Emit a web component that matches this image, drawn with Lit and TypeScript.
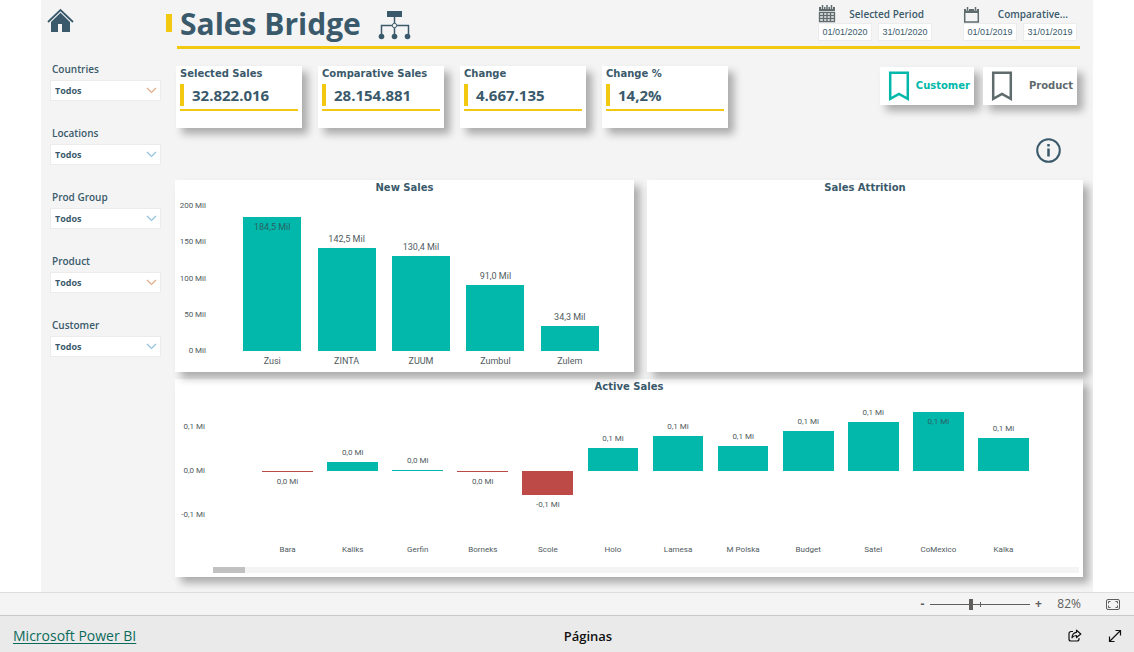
import { LitElement, html, css, svg } from "lit";
import { customElement, property } from "lit/decorators.js";
import { classMap } from "lit/directives/class-map.js";

interface Bar {
  name: string;
  value: number;
  label: string;
  inside?: boolean;
}

const NEW_SALES: Bar[] = [
  { name: "Zusi", value: 184.5, label: "184,5 Mil", inside: true },
  { name: "ZINTA", value: 142.5, label: "142,5 Mil" },
  { name: "ZUUM", value: 130.4, label: "130,4 Mil" },
  { name: "Zumbul", value: 91, label: "91,0 Mil" },
  { name: "Zulem", value: 34.3, label: "34,3 Mil" },
];

const ACTIVE_SALES: Bar[] = [
  { name: "Bara", value: -0.003, label: "0,0 Mi" },
  { name: "Kaliks", value: 0.02, label: "0,0 Mi" },
  { name: "Gerfin", value: 0.003, label: "0,0 Mi" },
  { name: "Borneks", value: -0.002, label: "0,0 Mi" },
  { name: "Scole", value: -0.055, label: "-0,1 Mi" },
  { name: "Holo", value: 0.053, label: "0,1 Mi" },
  { name: "Lamesa", value: 0.08, label: "0,1 Mi" },
  { name: "M Polska", value: 0.056, label: "0,1 Mi" },
  { name: "Budget", value: 0.091, label: "0,1 Mi" },
  { name: "Satel", value: 0.111, label: "0,1 Mi" },
  { name: "CoMexico", value: 0.134, label: "0,1 Mi", inside: true },
  { name: "Kalka", value: 0.074, label: "0,1 Mi" },
];

const KPIS = [
  ["Selected Sales", "32.822.016"],
  ["Comparative Sales", "28.154.881"],
  ["Change", "4.667.135"],
  ["Change %", "14,2%"],
];

const FILTERS = [
  { name: "Countries", warm: true },
  { name: "Locations", warm: false },
  { name: "Prod Group", warm: false },
  { name: "Product", warm: true },
  { name: "Customer", warm: false },
];

/** Column chart with an optional negative half below the zero line. */
@customElement("bar-chart")
export class BarChart extends LitElement {
  @property({ attribute: false }) bars: Bar[] = [];
  @property({ attribute: false }) ticks: string[] = [];
  @property({ type: Number }) max = 1;
  @property({ type: Boolean, reflect: true }) signed = false;

  static styles = css`
    :host {
      display: grid;
      grid-template-columns: 31px 1fr;
      column-gap: 29px;
      padding: 4px 27px 5px 0;
      font-family: Roboto, "Liberation Sans", sans-serif;
      font-size: 9px;
      line-height: 12px;
      color: #4f5b60;
    }
    :host([signed]) {
      column-gap: 49px;
      padding: 10px 47px 0 0;
      font-size: 8px;
    }
    .axis {
      height: 157px;
      display: flex;
      flex-direction: column;
      justify-content: space-between;
      text-align: right;
      font-size: 8px;
      white-space: nowrap;
    }
    :host([signed]) .axis {
      height: 100px;
      margin-top: 16px;
      padding-right: 1px;
    }
    .plot {
      display: grid;
      grid-auto-flow: column;
      grid-auto-columns: 1fr;
      padding-top: 6px;
    }
    :host([signed]) .plot {
      padding-top: 0;
    }
    .col {
      text-align: center;
      white-space: nowrap;
      min-width: 0;
    }
    .up {
      height: 145px;
      display: flex;
      flex-direction: column;
      justify-content: flex-end;
      align-items: center;
    }
    .down {
      height: 66px;
      display: flex;
      flex-direction: column;
      align-items: center;
    }
    :host([signed]) .up {
      height: 66px;
    }
    .bar {
      flex: none;
      width: 78%;
      min-height: 1px;
      background: #01b8aa;
    }
    .neg {
      background: #be4a47;
    }
    .above {
      margin-bottom: 3px;
    }
    .below {
      margin-top: 4px;
    }
    .in {
      display: block;
      padding-top: 4px;
      color: #2b6267;
    }
    .name {
      margin-top: 4px;
    }
    :host([signed]) .name {
      margin-top: 7px;
    }
  `;

  private bar(b: Bar) {
    const size = `height:${(Math.abs(b.value) / this.max) * 100}%`;
    const neg = b.value < 0;
    const body = html`<div class=${classMap({ bar: true, neg })} style=${size}>
      ${b.inside ? html`<span class="in">${b.label}</span>` : ""}
    </div>`;
    return html`<div class="col">
      <div class="up">
        ${neg || b.inside ? "" : html`<span class="above">${b.label}</span>`}${neg ? "" : body}
      </div>
      ${this.signed
        ? html`<div class="down">${neg ? html`${body}<span class="below">${b.label}</span>` : ""}</div>`
        : ""}
      <div class="name">${b.name}</div>
    </div>`;
  }

  render() {
    return html`
      <div class="axis">${this.ticks.map((t) => html`<span>${t}</span>`)}</div>
      <div class="plot">${this.bars.map((b) => this.bar(b))}</div>
    `;
  }
}

const homeIcon = svg`<svg width="28" height="26" viewBox="0 0 28 26" fill="#3a5a6b">
  <path d="M1 14 13.500 2 26 14" fill="none" stroke="#3a5a6b" stroke-width="1.800"/>
  <path d="M13.500 4.800 4 14V24h7v-8h4v8h8V14z"/></svg>`;

const bridgeIcon = svg`<svg width="34" height="30" viewBox="0 0 34 30" fill="#3a5a6b">
  <path d="M9 1h15v6H9z"/>
  <path d="M16.500 7v22M3.500 25v-9.500h27V25" fill="none" stroke="#3a5a6b" stroke-width="1.500"/>
  <circle cx="16.500" cy="15.500" r="2.200" fill="#f4f4f4" stroke="#3a5a6b"/>
  <circle cx="3.500" cy="26.500" r="2.800"/><circle cx="16.500" cy="26.500" r="2.800"/><circle cx="29.500" cy="26.500" r="2.800"/></svg>`;

const gridCalendar = svg`<svg width="18" height="18" viewBox="0 0 18 18" fill="none" stroke="#5f6b6d">
  <path d="M1 2h16v4H1z" fill="#5f6b6d" stroke="none"/>
  <path d="M4.500 0v4M9 0v4M13.500 0v4" stroke-width="3" stroke="#f4f4f4"/>
  <path d="M4.500 0v4M9 0v4M13.500 0v4" stroke-width="1.500"/>
  <path d="M1.500 7.500v9h15v-9zM1.500 10.500h15M1.500 13.500h15M5.500 7v10M9 7v10M12.500 7v10" stroke-width="1.300"/></svg>`;

const blankCalendar = svg`<svg width="18" height="18" viewBox="0 0 18 18" fill="none" stroke="#5f6b6d">
  <path d="M1 4h15v4H1z" fill="#5f6b6d" stroke="none"/>
  <path d="M4.500 2v3.500M12.500 2v3.500" stroke-width="3" stroke="#f4f4f4"/>
  <path d="M4.500 2v3.500M12.500 2v3.500" stroke-width="1.500"/>
  <path d="M1.700 8v9h13.600V8" stroke-width="1.500"/></svg>`;

const bookmark = svg`<svg width="22" height="30" viewBox="0 0 22 30" fill="none" stroke="currentColor" stroke-width="2.500">
  <path d="M2.200 1.800h17.600v26L11 23l-8.800 4.800z"/></svg>`;

const chevron = svg`<svg width="11" height="7" viewBox="0 0 11 7" fill="none" stroke="currentColor" stroke-width="1.200">
  <path d="M1 1l4.500 4.500L10 1"/></svg>`;

@customElement("app-root")
export class AppRoot extends LitElement {
  static styles = css`
    :host {
      display: flex;
      flex-direction: column;
      min-height: 100vh;
      background: #fff;
      color: #3a5a6b;
      font-family: "Open Sans", "Noto Sans", sans-serif;
      font-size: 10px;
      line-height: 16px;
    }
    * {
      box-sizing: border-box;
    }
    svg {
      display: block;
      flex: none;
    }
    h1,
    h2 {
      margin: 0;
    }
    button,
    input,
    select {
      font: inherit;
      color: inherit;
      margin: 0;
      border: 0;
      border-radius: 0;
    }
    button {
      padding: 0;
      background: none;
      cursor: pointer;
    }
    .report {
      flex: 1;
      margin: 0 41px;
      padding-bottom: 15px;
      background: #f4f4f4;
      overflow: hidden;
    }
    .header {
      display: flex;
      height: 46px;
      padding-right: 16px;
    }
    .home {
      flex: none;
      width: 125px;
      padding: 8px 0 0 6px;
    }
    .home button {
      display: block;
    }
    .mark {
      flex: none;
      width: 6px;
      height: 18px;
      margin: 14px 8px 0 0;
      background: #f2c811;
    }
    h1 {
      font-size: 30px;
      line-height: 48px;
      font-weight: 700;
      white-space: nowrap;
    }
    .bridge {
      margin: 10px auto 0 17px;
    }
    .period {
      width: 114px;
      margin-left: 31px;
      padding-top: 4px;
    }
    .period-title {
      display: flex;
      align-items: center;
      justify-content: space-between;
      height: 19px;
      padding-right: 8px;
      font-weight: 600;
      white-space: nowrap;
    }
    .second .period-title {
      padding-right: 9px;
    }
    .dates {
      display: flex;
      gap: 6px;
    }
    .dates input {
      width: 54px;
      height: 18px;
      padding: 0;
      border: 1px solid #ececec;
      background: #fff;
      text-align: center;
      font-family: "Liberation Sans", Arial, sans-serif;
      font-size: 9px;
    }
    .rule {
      height: 3px;
      margin: 0 13px 0 136px;
      background: #f2c811;
    }
    .body {
      display: grid;
      grid-template-columns: 134px 1fr;
      padding-right: 10px;
    }
    .filters {
      display: flex;
      flex-direction: column;
      gap: 24px;
      padding: 12px 14px 0 9px;
    }
    .filter {
      position: relative;
      font-weight: 600;
    }
    .filter label {
      display: block;
      padding-left: 2px;
      margin-bottom: 3px;
    }
    .filter select {
      display: block;
      width: 100%;
      height: 21px;
      padding: 0 4px;
      border: 1px solid #ececec;
      background: #fff;
      appearance: none;
      font-size: 9px;
      font-weight: 700;
    }
    .filter svg {
      position: absolute;
      right: 4px;
      bottom: 7px;
      color: #8fc3dd;
      pointer-events: none;
    }
    .filter.warm svg {
      color: #e0ab85;
    }
    .main {
      min-width: 0;
      padding-top: 17px;
    }
    .top {
      display: flex;
      justify-content: space-between;
      align-items: flex-start;
      padding: 0 6px 0 1px;
    }
    .kpis {
      display: grid;
      grid-template-columns: repeat(4, 126px);
      gap: 16px;
    }
    .card,
    .panel,
    .tab {
      background: #fff;
      box-shadow: 6px 6px 8px rgba(0, 0, 0, 0.3);
    }
    .card {
      height: 62px;
      padding: 0 4px;
    }
    h2,
    .tab {
      font-family: "DejaVu Sans", Verdana, sans-serif;
      font-size: 10px;
      line-height: 16px;
      font-weight: 700;
      white-space: nowrap;
    }
    .kpi {
      margin-top: 2px;
      padding-left: 8px;
      border-left: 4px solid #f2c811;
      font-size: 15px;
      line-height: 22px;
      font-weight: 700;
    }
    .line {
      height: 2px;
      margin-top: 3px;
      background: #f2c811;
    }
    .tabs {
      display: flex;
      gap: 9px;
      padding-top: 1px;
    }
    .tab {
      display: flex;
      align-items: center;
      justify-content: space-between;
      width: 94px;
      height: 38px;
      padding: 0 4px 0 8px;
      color: #5f6b6d;
    }
    .tab.on {
      color: #01b8aa;
    }
    .info {
      display: flex;
      justify-content: flex-end;
      padding: 10px 22px 17px 0;
    }
    .panels {
      position: relative;
      z-index: 1;
      display: grid;
      grid-template-columns: 459fr 436fr;
      gap: 13px;
    }
    .panel h2 {
      text-align: center;
    }
    .active {
      margin-top: 7px;
      padding-bottom: 4px;
    }
    .scroll {
      height: 6px;
      margin: 11px 4px 0 38px;
      background: #f4f4f4;
    }
    .thumb {
      width: 32px;
      height: 6px;
      background: #c1c1c1;
    }
    .status {
      display: flex;
      align-items: center;
      justify-content: flex-end;
      height: 24px;
      padding-right: 14px;
      border-top: 1px solid #dedede;
      border-bottom: 1px solid #c8c8c8;
      background: #f4f4f4;
      color: #605e5c;
      font-size: 12px;
    }
    .step {
      width: 16px;
      line-height: 16px;
      font-weight: 700;
    }
    .zoom {
      width: 100px;
      height: 12px;
      appearance: none;
      background:
        linear-gradient(#605e5c, #605e5c) 50px 50% / 1px 5px no-repeat,
        linear-gradient(#605e5c, #605e5c) 0 50% / 100% 1px no-repeat;
    }
    .zoom::-webkit-slider-thumb {
      appearance: none;
      width: 4px;
      height: 11px;
      background: #605e5c;
    }
    .percent {
      margin: 0 25px 0 11px;
    }
    .footer {
      display: grid;
      grid-template-columns: 27fr auto 25fr;
      align-items: center;
      height: 36px;
      padding: 3px 12px 0 13px;
      background: #eaeaea;
      color: #111;
      font-size: 13px;
      font-weight: 600;
    }
    .footer a {
      justify-self: start;
      color: #0b6a5b;
      font-size: 14px;
      font-weight: 400;
      text-underline-offset: 2px;
    }
    .actions {
      display: flex;
      justify-content: flex-end;
      gap: 26px;
    }
  `;

  private period(title: string, from: string, to: string, icon: unknown, second: boolean) {
    return html`<div class=${classMap({ period: true, second })}>
      <div class="period-title">${icon}<span>${title}</span></div>
      <div class="dates">
        <input type="text" aria-label="${title} from" .value=${from} />
        <input type="text" aria-label="${title} to" .value=${to} />
      </div>
    </div>`;
  }

  render() {
    return html`
      <main class="report">
        <header class="header">
          <div class="home"><button aria-label="Home">${homeIcon}</button></div>
          <div class="mark"></div>
          <h1>Sales Bridge</h1>
          <div class="bridge">${bridgeIcon}</div>
          ${this.period("Selected Period", "01/01/2020", "31/01/2020", gridCalendar, false)}
          ${this.period("Comparative...", "01/01/2019", "31/01/2019", blankCalendar, true)}
        </header>
        <div class="rule"></div>
        <div class="body">
          <aside class="filters">
            ${FILTERS.map(
              (f, i) => html`<div class=${classMap({ filter: true, warm: f.warm })}>
                <label for="filter-${i}">${f.name}</label>
                <select id="filter-${i}"><option>Todos</option></select>
                ${chevron}
              </div>`
            )}
          </aside>
          <div class="main">
            <div class="top">
              <div class="kpis">
                ${KPIS.map(
                  ([name, value]) => html`<section class="card">
                    <h2>${name}</h2>
                    <div class="kpi">${value}</div>
                    <div class="line"></div>
                  </section>`
                )}
              </div>
              <div class="tabs">
                <button class="tab on">${bookmark}Customer</button>
                <button class="tab">${bookmark}Product</button>
              </div>
            </div>
            <div class="info">
              <button aria-label="Information">
                <svg width="25" height="25" viewBox="0 0 25 25" fill="none" stroke="#3a5a6b">
                  <circle cx="12.500" cy="12.500" r="11.300" stroke-width="2" />
                  <path d="M12.500 6v2.500M12.500 10.500V18.500" stroke-width="2.500" />
                </svg>
              </button>
            </div>
            <div class="panels">
              <section class="panel">
                <h2>New Sales</h2>
                <bar-chart
                  .bars=${NEW_SALES}
                  .ticks=${["200 Mil", "150 Mil", "100 Mil", "50 Mil", "0 Mil"]}
                  .max=${200}
                ></bar-chart>
              </section>
              <section class="panel"><h2>Sales Attrition</h2></section>
            </div>
            <section class="panel active">
              <h2>Active Sales</h2>
              <bar-chart
                signed
                .bars=${ACTIVE_SALES}
                .ticks=${["0,1 Mi", "0,0 Mi", "-0,1 Mi"]}
                .max=${0.15}
              ></bar-chart>
              <div class="scroll"><div class="thumb"></div></div>
            </section>
          </div>
        </div>
      </main>
      <div class="status">
        <button class="step" aria-label="Zoom out">-</button>
        <input class="zoom" type="range" min="0" max="100" value="40" aria-label="Zoom" />
        <button class="step" aria-label="Zoom in">+</button>
        <span class="percent">82%</span>
        <button aria-label="Fit to page">
          <svg width="14" height="11" viewBox="0 0 14 11" fill="none" stroke="#605e5c">
            <rect x=".5" y=".5" width="13" height="10" rx="1.500" />
            <path d="M2.500 4.500v-2h2M9.500 2.500h2v2M11.500 6.500v2h-2M4.500 8.500h-2v-2" />
          </svg>
        </button>
      </div>
      <footer class="footer">
        <a href="#">Microsoft Power BI</a>
        <span>Páginas</span>
        <div class="actions">
          <button aria-label="Share">
            <svg width="14" height="14" viewBox="0 0 14 14" fill="none" stroke="#111" stroke-width="1.200">
              <path d="M5 2.500H3a2 2 0 0 0-2 2V10a2 2 0 0 0 2 2h6a2 2 0 0 0 2-2V9" />
              <path d="M8.500 1.200 12.800 5 8.500 8.500V6.500C6.500 6.500 5 7.200 4 8.800 4.200 6 5.500 3.500 8.500 3.300z" stroke-linejoin="round" />
            </svg>
          </button>
          <button aria-label="Full screen">
            <svg width="14" height="14" viewBox="0 0 14 14" fill="none" stroke="#111" stroke-width="1.200">
              <path d="M1.500 12.500l11-11M7.500 1.500h5v5M1.500 7.500v5h5" />
            </svg>
          </button>
        </div>
      </footer>
    `;
  }
}
